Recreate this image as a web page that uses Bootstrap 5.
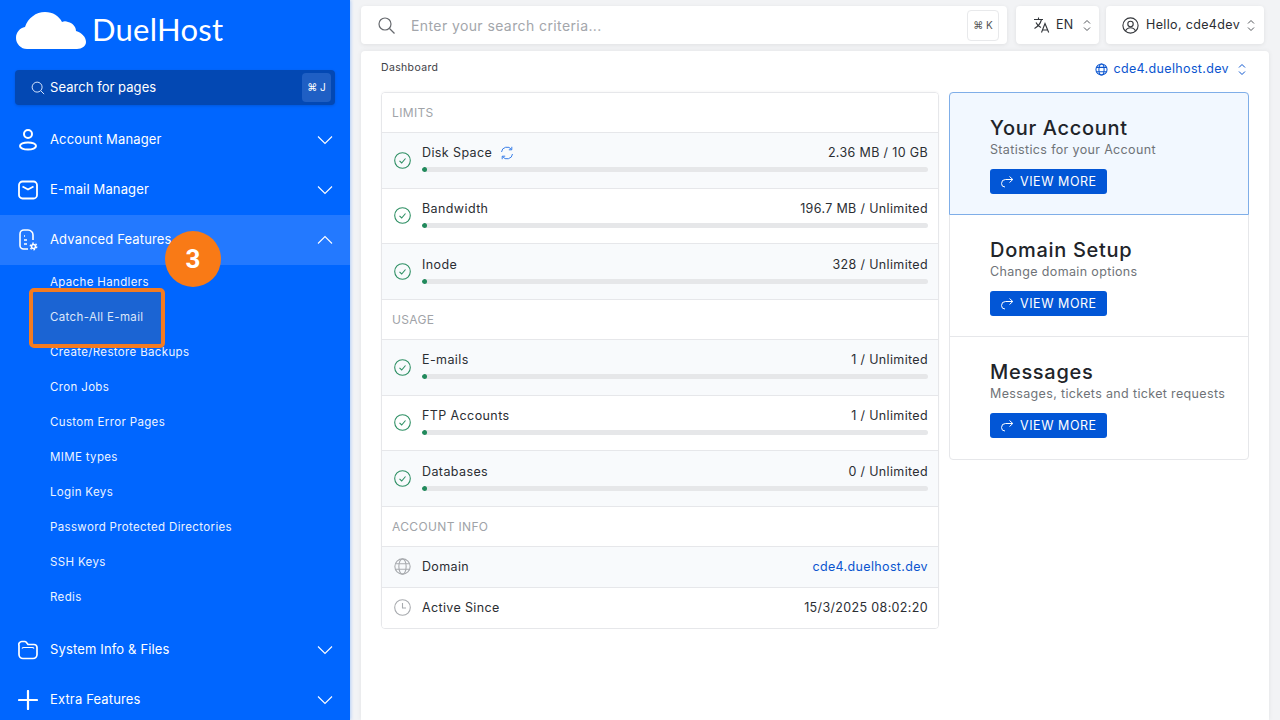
<!DOCTYPE html>
<html lang="en"><head><meta charset="utf-8"><title>DuelHost</title>
<link rel="stylesheet" href="https://cdn.jsdelivr.net/npm/bootstrap@5.3.0/dist/css/bootstrap.min.css">
<style>
html,body{height:720px;overflow:hidden}
body{background:#f2f3f5;font-family:"Inter","Liberation Sans",sans-serif;color:#2b2e33;font-size:13px;letter-spacing:.35px}
svg{flex:none;display:block}
.shell{height:720px}
.sidebar{width:350px;height:720px;background:#0066ff;color:#fff;flex:none;position:relative;overflow:hidden;box-shadow:1px 0 3px rgba(0,102,255,.25)}
.sidebar>*{flex:none}
.brand{height:60px;padding:11px 0 0 16px;gap:6px}
.brand-name{font-family:"Lato",sans-serif;font-weight:400;font-size:31px;line-height:38px;letter-spacing:.25px;color:#fff;margin-top:-1px}
.side-search{margin:10px 15px 10px;height:35px;background:#0348b3;border-radius:4px;padding:0 4px 0 16px;gap:5px;font-size:13px;letter-spacing:.05px;box-shadow:0 1px 3px rgba(0,0,0,.15)}
.kbd-dark{width:29px;height:29px;background:#1f5fc4;border-radius:4px;font-size:10px;letter-spacing:0}
.nav-head{height:50px;padding:0 17px 0 18px;font-size:13px;color:#fff;letter-spacing:.15px}
.nav-head.open{background:#2379ff}
.nav-label{margin-left:12px}
.sub-list{padding-bottom:10px}
.sub-item{height:35px;line-height:35px;padding-left:50px;font-size:11.5px;letter-spacing:.35px;color:#eef4ff}
.sub-item.picked{position:relative;z-index:1;color:#dbe6fa}
.callout-box{position:absolute;left:29px;top:288px;width:136px;height:60px;border:4px solid #f47b20;border-radius:5px;background:rgba(90,95,110,.3)}
.callout-num{position:absolute;left:165px;top:231px;width:56px;height:56px;border-radius:50%;background:#f97a16;color:#fff;font-family:"Roboto",sans-serif;font-weight:700;font-size:26px;letter-spacing:0}
.main-area{padding:6px 11px 0;min-width:0}
.top-row{margin-right:5px}
.top-box{height:38px;background:#fff;border-radius:4px;box-shadow:0 1px 4px rgba(0,0,0,.08)}
.top-search{padding:0 8px 0 17px}
.top-search span.ph{margin-left:16px;color:#a3a6ab;font-size:14px;letter-spacing:.4px}
.kbd-light{width:32px;height:31px;border:1px solid #e8e9eb;border-radius:4px;font-size:10px;letter-spacing:0;color:#555}
.lang{width:83px;margin-left:9px;padding:0 8px 0 17px;font-size:12.5px}
.lang span{margin-left:6px}
.user{width:158px;margin-left:7px;padding:0 9px 0 16px;font-size:12.5px}
.user span{margin-left:7px}
.content-card{margin-top:7px;height:669px;background:#fff;border-radius:4px 4px 0 0;padding:0 20px;box-shadow:0 0 5px rgba(0,0,0,.07)}
.crumb-row{height:41px;padding-top:2px}
.crumb{font-size:10.5px;color:#3d4046;line-height:30px}
.domain-pick{color:#0b55cf;font-size:12.5px;margin-right:3px;gap:5px;margin-top:7px}
.limit-list{width:558px;flex:none;border:1px solid #e6e7ea;border-radius:4px;overflow:hidden;box-shadow:0 -1px 2px rgba(0,0,0,.03)}
.sec-head{height:40px;line-height:40px;padding-left:10px;color:#a0a3a8;font-size:12px;letter-spacing:.35px;background:#fff;border-bottom:1px solid #e6e7ea}
.stat-row{height:55.67px;padding:0 10px 0 12px;border-bottom:1px solid #e6e7ea;background:#fff}
.stat-row.alt,.info-row.alt{background:#f8fafc}
.stat-body{margin-left:11px;flex:1;min-width:0}
.stat-top{font-size:12.5px;line-height:18px;letter-spacing:.4px;margin-top:-4px;margin-bottom:5px}
.stat-val{font-size:12.5px;letter-spacing:.35px}
.meter{height:5px;background:#e6e7e9;border-radius:3px;overflow:hidden}
.meter-fill{height:5px;background:#218a5c;border-radius:3px}
.info-row{height:41px;padding:0 10px 0 12px;border-bottom:1px solid #e6e7ea;font-size:12.5px;background:#fff}
.info-row:last-child{border-bottom:0;height:40px}
.link-blue{color:#0b55cf}
.side-cards{width:300px;margin-left:10px;border:1px solid #e6e7ea;border-radius:4px;align-self:flex-start}
.feature{height:122px;padding:23px 10px 0 40px;border-bottom:1px solid #e6e7ea}
.feature:last-child{border-bottom:0}
.feature.active{background:#f2f8ff;outline:1px solid #7faee8;outline-offset:-1px;border-radius:4px 4px 0 0;border-bottom:0;height:123px;margin:-1px -1px 0;padding:24px 10px 0 41px}
.feature-title{font-size:20px;line-height:24px;font-weight:500;color:#212429;letter-spacing:.7px;margin:0}
.feature-sub{font-size:12.5px;line-height:18px;color:#6f7378;letter-spacing:.35px;margin:1px 0 10px}
.btn-more{background:#0256d6;color:#fff;height:25px;width:117px;border-radius:3px;font-size:12.5px;padding:0 0 0 10px;gap:6px;letter-spacing:.55px;border:0;line-height:25px}
.btn-more:hover{background:#0256d6;color:#fff}
</style></head><body>
<div class="shell d-flex">
<aside class="sidebar d-flex flex-column">
  <div class="brand d-flex align-items-start">
    <svg width="70" height="38" viewBox="0 0 70 38"><path d="M11 38C5 38 0 33 0 27c0-6 4-10 9-11 3-9 11-15 20-15 8 0 14 4 17 10 2-1 4-1 6 0 5 1 8 5 8 9 6 2 10 6 10 11 0 4-4 7-9 7z" fill="#fff"/></svg>
    <div class="brand-name">DuelHost</div>
  </div>
  <div class="side-search d-flex align-items-center">
    <svg width="14" height="14" viewBox="0 0 16 16" fill="none" stroke="#dce8ff" stroke-width="1.1"><circle cx="7" cy="7" r="5.7"/><path d="M11.2 11.2 15 15"/></svg>
    <span class="flex-grow-1">Search for pages</span>
    <span class="kbd-dark d-flex align-items-center justify-content-center">⌘ J</span>
  </div>
  <div class="nav-head d-flex align-items-center">
    <svg width="20" height="24" viewBox="0 0 20 24" fill="none" stroke="#fff" stroke-width="2"><circle cx="10" cy="6" r="4"/><ellipse cx="10" cy="18" rx="8" ry="3.6"/></svg>
    <span class="nav-label flex-grow-1">Account Manager</span>
    <svg width="16" height="10" viewBox="0 0 16 10" fill="none" stroke="#fff" stroke-width="1.1"><path d="M1 1.5l7 7 7-7"/></svg>
  </div>
  <div class="nav-head d-flex align-items-center">
    <svg width="20" height="20" viewBox="0 0 20 20" fill="none" stroke="#fff" stroke-width="1.8"><rect x="1" y="1.5" width="18" height="17" rx="3.5"/><path d="M4.5 6.5 10 9.5l5.5-3"/></svg>
    <span class="nav-label flex-grow-1">E-mail Manager</span>
    <svg width="16" height="10" viewBox="0 0 16 10" fill="none" stroke="#fff" stroke-width="1.1"><path d="M1 1.5l7 7 7-7"/></svg>
  </div>
  <div class="nav-head open d-flex align-items-center">
    <svg width="20" height="22" viewBox="0 0 20 22" fill="none" stroke="#fff" stroke-width="1.6"><path d="M10 20H5.500A3.500 3.500 0 0 1 2 16.500V5A4 4 0 0 1 6 1h4a5 5 0 0 1 5 5v5"/><path d="M6 7h1M6 11h3M6 15h3" stroke-width="1.6"/><circle cx="15.500" cy="17.500" r="2" fill="#2379ff" stroke="#fff" stroke-width="1.6"/><circle cx="15.500" cy="17.500" r="3.300" stroke="#fff" stroke-width="1.300" stroke-dasharray="1.700 1.750"/></svg>
    <span class="nav-label flex-grow-1">Advanced Features</span>
    <svg width="16" height="10" viewBox="0 0 16 10" fill="none" stroke="#fff" stroke-width="1.1"><path d="M1 8.500l7-7 7 7"/></svg>
  </div>
  <div class="sub-list">
    <div class="sub-item">Apache Handlers</div>
    <div class="sub-item picked">Catch-All E-mail</div>
    <div class="sub-item">Create/Restore Backups</div>
    <div class="sub-item">Cron Jobs</div>
    <div class="sub-item">Custom Error Pages</div>
    <div class="sub-item">MIME types</div>
    <div class="sub-item">Login Keys</div>
    <div class="sub-item">Password Protected Directories</div>
    <div class="sub-item">SSH Keys</div>
    <div class="sub-item">Redis</div>
  </div>
  <div class="nav-head d-flex align-items-center">
    <svg width="20" height="20" viewBox="0 0 20 20" fill="none" stroke="#fff" stroke-width="1.7"><path d="M1 5.500V14.500A4 4 0 0 0 5 18.500H15A4 4 0 0 0 19 14.500V7.500A3 3 0 0 0 16 4.500H10L8.500 2.500A2 2 0 0 0 7 1.500H4A3 3 0 0 0 1 5.500Z"/><path d="M4 8.500A2 2 0 0 1 6 7.500H14A2 2 0 0 1 16 8.500" stroke-width="1.200"/></svg>
    <span class="nav-label flex-grow-1">System Info &amp; Files</span>
    <svg width="16" height="10" viewBox="0 0 16 10" fill="none" stroke="#fff" stroke-width="1.1"><path d="M1 1.500l7 7 7-7"/></svg>
  </div>
  <div class="nav-head d-flex align-items-center">
    <svg width="20" height="20" viewBox="0 0 20 20" fill="none" stroke="#fff" stroke-width="2.200" stroke-linecap="round"><path d="M10 1v18M1 10h18"/></svg>
    <span class="nav-label flex-grow-1">Extra Features</span>
    <svg width="16" height="10" viewBox="0 0 16 10" fill="none" stroke="#fff" stroke-width="1.1"><path d="M1 1.500l7 7 7-7"/></svg>
  </div>
  <div class="callout-box"></div>
  <div class="callout-num d-flex align-items-center justify-content-center">3</div>
</aside>
<main class="main-area flex-grow-1 d-flex flex-column">
  <div class="top-row d-flex">
    <div class="top-box top-search flex-grow-1 d-flex align-items-center">
      <svg width="17" height="17" viewBox="0 0 17 17" fill="none" stroke="#66696e" stroke-width="1.200"><circle cx="7" cy="7" r="6"/><path d="M11.500 11.500 16.500 16.500"/></svg>
      <span class="ph flex-grow-1">Enter your search criteria...</span>
      <span class="kbd-light d-flex align-items-center justify-content-center">⌘ K</span>
    </div>
    <div class="top-box lang d-flex align-items-center">
      <svg width="17" height="18" viewBox="0 0 17 17" fill="none" stroke="#33363b" stroke-width="1.100"><path d="M1 3h9M5.500 1v2M8.500 3C7.500 7 5 10 1.500 12M3 6c1 2.500 3 4 5 5"/><path d="M8.500 16l3.500-9 3.700 9M9.700 13.500h5"/></svg>
      <span class="flex-grow-1">EN</span>
      <svg width="8" height="13" viewBox="0 0 8 13" fill="none" stroke="#55585d"><path d="M1 4.500l3-3 3 3M1 8.500l3 3 3-3"/></svg>
    </div>
    <div class="top-box user d-flex align-items-center">
      <svg width="17" height="17" viewBox="0 0 17 17" fill="none" stroke="#33363b" stroke-width="1.100"><circle cx="8.500" cy="8.500" r="7.600"/><circle cx="8.500" cy="7" r="2.700"/><path d="M3.500 14c1-2.500 3-3.300 5-3.300s4 .8 5 3.300"/></svg>
      <span class="flex-grow-1">Hello, cde4dev</span>
      <svg width="8" height="13" viewBox="0 0 8 13" fill="none" stroke="#55585d"><path d="M1 4.500l3-3 3 3M1 8.500l3 3 3-3"/></svg>
    </div>
  </div>
  <div class="content-card">
    <div class="crumb-row d-flex justify-content-between align-items-start">
      <div class="crumb">Dashboard</div>
      <div class="domain-pick d-flex align-items-center">
        <svg width="13" height="13" viewBox="0 0 14 14" fill="none" stroke="#0b55cf" stroke-width="1.100"><circle cx="7" cy="7" r="6"/><ellipse cx="7" cy="7" rx="2.800" ry="6"/><path d="M1.500 4.700h11M1.500 9.300h11"/></svg>
        <span>cde4.duelhost.dev</span>
        <svg width="8" height="13" viewBox="0 0 8 13" fill="none" stroke="#0b55cf" class="ms-1"><path d="M1 4.500l3-3 3 3M1 8.500l3 3 3-3"/></svg>
      </div>
    </div>
    <div class="d-flex">
      <div class="limit-list">
        <div class="sec-head">LIMITS</div>
        <div class="stat-row alt d-flex align-items-center">
          <svg width="17" height="17" viewBox="0 0 17 17" fill="none" stroke="#2d8f63" stroke-width="1.100"><circle cx="8.500" cy="8.500" r="7.800"/><path d="M5.500 8.800l2.200 2.200 3.800-4.500"/></svg>
          <div class="stat-body"><div class="stat-top d-flex justify-content-between"><span class="d-flex align-items-center">Disk Space<svg class="ms-2" width="14" height="14" viewBox="0 0 14 14" fill="none" stroke="#3a7fe8" stroke-width="1"><path d="M1.500 6A5.500 5.500 0 0 1 11.500 3.500M12.500 8A5.500 5.500 0 0 1 2.500 10.500M11.800 .8V3.800H8.800M2.200 13.200V10.200H5.200"/></svg></span><span class="stat-val">2.36 MB / 10 GB</span></div><div class="meter"><div class="meter-fill" style="width:1%"></div></div></div>
        </div>
        <div class="stat-row d-flex align-items-center">
          <svg width="17" height="17" viewBox="0 0 17 17" fill="none" stroke="#2d8f63" stroke-width="1.100"><circle cx="8.500" cy="8.500" r="7.800"/><path d="M5.500 8.800l2.200 2.200 3.800-4.500"/></svg>
          <div class="stat-body"><div class="stat-top d-flex justify-content-between"><span>Bandwidth</span><span class="stat-val">196.7 MB / Unlimited</span></div><div class="meter"><div class="meter-fill" style="width:1%"></div></div></div>
        </div>
        <div class="stat-row alt d-flex align-items-center">
          <svg width="17" height="17" viewBox="0 0 17 17" fill="none" stroke="#2d8f63" stroke-width="1.100"><circle cx="8.500" cy="8.500" r="7.800"/><path d="M5.500 8.800l2.200 2.200 3.800-4.500"/></svg>
          <div class="stat-body"><div class="stat-top d-flex justify-content-between"><span>Inode</span><span class="stat-val">328 / Unlimited</span></div><div class="meter"><div class="meter-fill" style="width:1%"></div></div></div>
        </div>
        <div class="sec-head">USAGE</div>
        <div class="stat-row alt d-flex align-items-center">
          <svg width="17" height="17" viewBox="0 0 17 17" fill="none" stroke="#2d8f63" stroke-width="1.100"><circle cx="8.500" cy="8.500" r="7.800"/><path d="M5.500 8.800l2.200 2.200 3.800-4.500"/></svg>
          <div class="stat-body"><div class="stat-top d-flex justify-content-between"><span>E-mails</span><span class="stat-val">1 / Unlimited</span></div><div class="meter"><div class="meter-fill" style="width:1%"></div></div></div>
        </div>
        <div class="stat-row d-flex align-items-center">
          <svg width="17" height="17" viewBox="0 0 17 17" fill="none" stroke="#2d8f63" stroke-width="1.100"><circle cx="8.500" cy="8.500" r="7.800"/><path d="M5.500 8.800l2.200 2.200 3.800-4.500"/></svg>
          <div class="stat-body"><div class="stat-top d-flex justify-content-between"><span>FTP Accounts</span><span class="stat-val">1 / Unlimited</span></div><div class="meter"><div class="meter-fill" style="width:1%"></div></div></div>
        </div>
        <div class="stat-row alt d-flex align-items-center">
          <svg width="17" height="17" viewBox="0 0 17 17" fill="none" stroke="#2d8f63" stroke-width="1.100"><circle cx="8.500" cy="8.500" r="7.800"/><path d="M5.500 8.800l2.200 2.200 3.800-4.500"/></svg>
          <div class="stat-body"><div class="stat-top d-flex justify-content-between"><span>Databases</span><span class="stat-val">0 / Unlimited</span></div><div class="meter"><div class="meter-fill" style="width:1%"></div></div></div>
        </div>
        <div class="sec-head">ACCOUNT INFO</div>
        <div class="info-row alt d-flex align-items-center">
          <svg width="17" height="17" viewBox="0 0 14 14" fill="none" stroke="#a8abaf" stroke-width=".9"><circle cx="7" cy="7" r="6.300"/><ellipse cx="7" cy="7" rx="3" ry="6.300"/><path d="M1.500 4.700h11M1.500 9.300h11"/></svg>
          <span class="stat-body">Domain</span><span class="link-blue">cde4.duelhost.dev</span>
        </div>
        <div class="info-row d-flex align-items-center">
          <svg width="17" height="17" viewBox="0 0 17 17" fill="none" stroke="#a8abaf" stroke-width="1.100"><circle cx="8.500" cy="8.500" r="7.800"/><path d="M8.500 4v5h3.500"/></svg>
          <span class="stat-body">Active Since</span><span>15/3/2025 08:02:20</span>
        </div>
      </div>
      <div class="side-cards">
        <div class="feature active">
          <h3 class="feature-title">Your Account</h3><p class="feature-sub">Statistics for your Account</p>
          <a class="btn btn-more d-flex align-items-center" href="#"><svg width="14" height="13" viewBox="0 0 14 13" fill="none" stroke="#fff" stroke-width="1"><path d="M9.500 1.500 12.800 4.500 9.500 7.500M12.500 4.500H5.500A4 4 0 0 0 1.500 8.500 A3.500 3.500 0 0 0 5 12"/></svg>VIEW MORE</a>
        </div>
        <div class="feature">
          <h3 class="feature-title">Domain Setup</h3><p class="feature-sub">Change domain options</p>
          <a class="btn btn-more d-flex align-items-center" href="#"><svg width="14" height="13" viewBox="0 0 14 13" fill="none" stroke="#fff" stroke-width="1"><path d="M9.500 1.500 12.800 4.500 9.500 7.500M12.500 4.500H5.500A4 4 0 0 0 1.500 8.500 A3.500 3.500 0 0 0 5 12"/></svg>VIEW MORE</a>
        </div>
        <div class="feature">
          <h3 class="feature-title">Messages</h3><p class="feature-sub">Messages, tickets and ticket requests</p>
          <a class="btn btn-more d-flex align-items-center" href="#"><svg width="14" height="13" viewBox="0 0 14 13" fill="none" stroke="#fff" stroke-width="1"><path d="M9.500 1.500 12.800 4.500 9.500 7.500M12.500 4.500H5.500A4 4 0 0 0 1.500 8.500 A3.500 3.500 0 0 0 5 12"/></svg>VIEW MORE</a>
        </div>
      </div>
    </div>
  </div>
</main>
</div>
<script src="https://cdn.jsdelivr.net/npm/bootstrap@5.3.0/dist/js/bootstrap.bundle.min.js"></script>
</body></html>
